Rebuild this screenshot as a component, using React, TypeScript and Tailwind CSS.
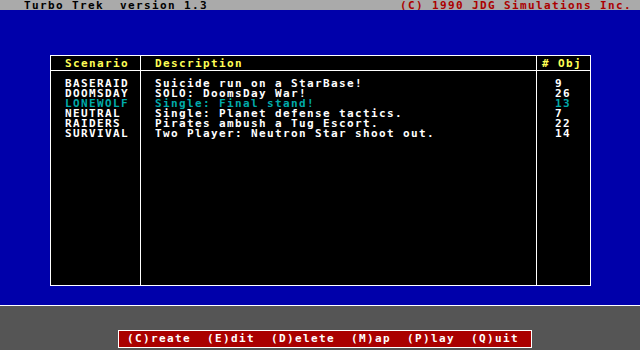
import React from 'react';

interface Scenario {
  name: string;
  desc: string;
  obj: number;
  active?: boolean;
}

const SCENARIOS: Scenario[] = [
  { name: 'BASERAID', desc: 'Suicide run on a StarBase!', obj: 9 },
  { name: 'DOOMSDAY', desc: 'SOLO: DoomsDay War!', obj: 26 },
  { name: 'LONEWOLF', desc: 'Single: Final stand!', obj: 13, active: true },
  { name: 'NEUTRAL', desc: 'Single: Planet defense tactics.', obj: 7 },
  { name: 'RAIDERS', desc: 'Pirates ambush a Tug Escort.', obj: 22 },
  { name: 'SURVIVAL', desc: 'Two Player: Neutron Star shoot out.', obj: 14 },
];

const rowColor = (s: Scenario) => (s.active ? 'text-[#00aaaa]' : 'text-white');

const App: React.FC = () => {
  return (
    <div className="w-[640px] h-[350px] flex flex-col font-['DejaVu_Sans_Mono',monospace] font-bold text-[11px] tracking-[1.38px] whitespace-pre overflow-hidden">
      <header className="h-[10px] bg-[#aaaaaa] flex justify-between pl-[24px] pr-[8px] leading-[12px]">
        <span className="text-black">Turbo Trek  version 1.3</span>
        <span className="text-[#aa0000]">(C) 1990 JDG Simulations Inc.</span>
      </header>

      <main className="h-[296px] bg-[#0000aa] border-b border-white pt-[45px] pl-[50px]">
        <div className="w-[541px] h-[231px] bg-black border border-white flex">
          <div className="w-[90px] border-r border-white flex flex-col">
            <div className="h-[15px] border-b border-white text-[#ffff55] pl-[14px] pt-[3px] leading-[10px]">Scenario</div>
            <div className="pt-[8px] pl-[14px] leading-[10px]">
              {SCENARIOS.map((s) => (
                <div key={s.name} className={rowColor(s)}>{s.name}</div>
              ))}
            </div>
          </div>
          <div className="w-[396px] border-r border-white flex flex-col">
            <div className="h-[15px] border-b border-white text-[#ffff55] pl-[14px] pt-[3px] leading-[10px]">Description</div>
            <div className="pt-[8px] pl-[14px] leading-[10px]">
              {SCENARIOS.map((s) => (
                <div key={s.name} className={rowColor(s)}>{s.desc}</div>
              ))}
            </div>
          </div>
          <div className="flex-1 flex flex-col">
            <div className="h-[15px] border-b border-white text-[#ffff55] pl-[5px] pt-[3px] leading-[10px]"># Obj</div>
            <div className="pt-[8px] pl-[18px] leading-[10px]">
              {SCENARIOS.map((s) => (
                <div key={s.name} className={rowColor(s)}>{s.obj}</div>
              ))}
            </div>
          </div>
        </div>
      </main>

      <footer className="flex-1 bg-[#555555] pt-[24px] pl-[118px]">
        <div className="w-[414px] h-[18px] bg-[#aa0000] border border-white text-white pl-[8px] leading-[15px]">
          (C)reate  (E)dit  (D)elete  (M)ap  (P)lay  (Q)uit
        </div>
      </footer>
    </div>
  );
};

export default App;
